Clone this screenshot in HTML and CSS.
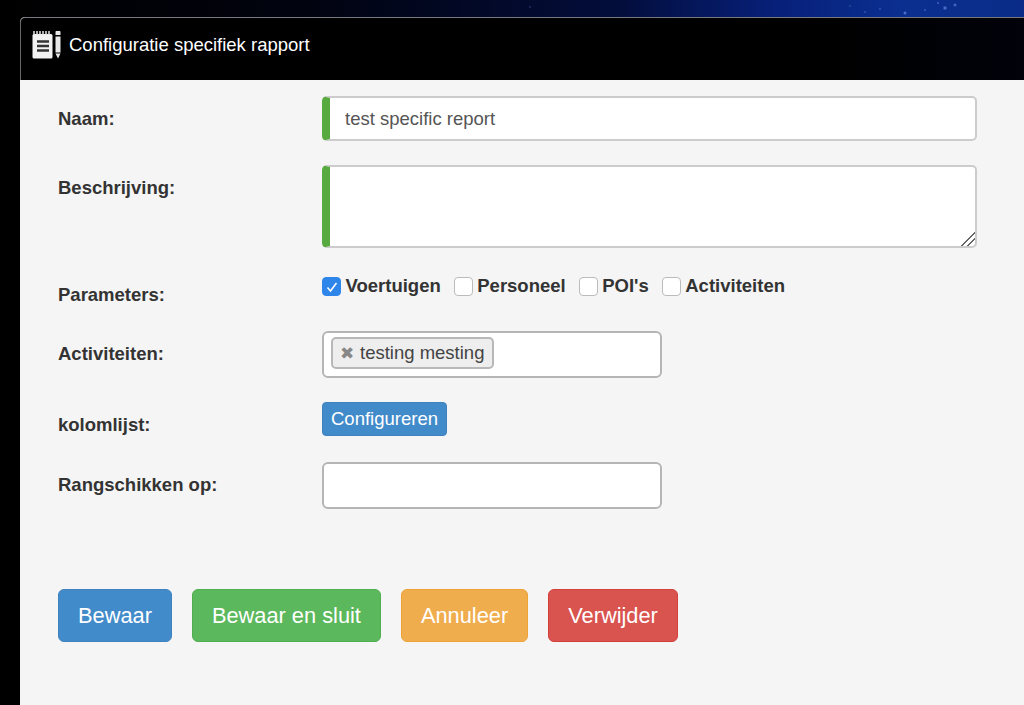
FILE: index.html
```html
<!DOCTYPE html>
<html lang="nl">
<head>
  <meta charset="UTF-8">
  <title>Configuratie specifiek rapport</title>
  <link rel="stylesheet" href="styles.css">
</head>
<body>
  <div class="window">
    <div class="window-head">
      <svg class="head-icon" width="30" height="28" viewBox="0 0 30 28">
        <rect x="0.500" y="3" width="20" height="24.500" rx="1.500" fill="#f2f2f2"/>
        <path d="M2 0v4M5 0v4M8 0v4M11 0v4M14 0v4M17 0v4" stroke="#e4e4e4" stroke-width="1.500"/>
        <path d="M5 10.500h12M5 15h12M5 19.500h12" stroke="#333" stroke-width="2.600"/>
        <path d="M23.500 1.500a2 2 0 0 1 5 0V4h-5zM23.500 5.500h5v16h-5zM23.500 22.500h5L26 27.500z" fill="#e8e8e8"/>
      </svg>
      <span class="head-title">Configuratie specifiek rapport</span>
    </div>
    <form class="form">
      <div class="row row-naam">
        <label class="lbl">Naam:</label>
        <input class="field required" value="test specific report">
      </div>
      <div class="row row-desc">
        <label class="lbl">Beschrijving:</label>
        <textarea class="field required area"></textarea>
      </div>
      <div class="row row-params">
        <label class="lbl">Parameters:</label>
        <div class="checks">
          <span class="check"><span class="box on"><svg width="18" height="18" viewBox="0 0 18 18"><path d="M4.500 9.500l3 3.500 6-8" fill="none" stroke="#fff" stroke-width="1.600"/></svg></span>Voertuigen</span>
          <span class="check"><span class="box"></span>Personeel</span>
          <span class="check"><span class="box"></span>POI's</span>
          <span class="check"><span class="box"></span>Activiteiten</span>
        </div>
      </div>
      <div class="row row-act">
        <label class="lbl">Activiteiten:</label>
        <div class="select2">
          <span class="tag"><span class="tag-x">✖</span>testing mesting</span>
        </div>
      </div>
      <div class="row row-kolom">
        <label class="lbl">kolomlijst:</label>
        <div><button type="button" class="btn btn-blue btn-small">Configureren</button></div>
      </div>
      <div class="row row-rang">
        <label class="lbl">Rangschikken op:</label>
        <div class="select2"></div>
      </div>
      <div class="actions">
        <button type="button" class="btn btn-blue">Bewaar</button>
        <button type="button" class="btn btn-green">Bewaar en sluit</button>
        <button type="button" class="btn btn-orange">Annuleer</button>
        <button type="button" class="btn btn-red">Verwijder</button>
      </div>
    </form>
  </div>
</body>
</html>
```

FILE: styles.css
```css
html, body {
  height: 100%;
  overflow: hidden;
}
body {
  margin: 0;
  padding: 17px 0 0 20px;
  box-sizing: border-box;
  font-family: "Liberation Sans", Arial, sans-serif;
  color: #333;
  background-color: #000;
  background-image:
    radial-gradient(circle at 905px 13px, #6f8fe6 0, transparent 2px),
    radial-gradient(circle at 945px 8px, #5f7fd8 0, transparent 2.500px),
    radial-gradient(circle at 938px 3px, #5877d0 0, transparent 1.500px),
    radial-gradient(circle at 925px 10px, #4a6ac8 0, transparent 1.500px),
    radial-gradient(circle at 955px 5px, #5f7fd8 0, transparent 2px),
    radial-gradient(circle at 880px 9px, #3f5fb8 0, transparent 1.500px),
    radial-gradient(circle at 865px 12px, #3f5fb8 0, transparent 1.500px),
    radial-gradient(circle at 850px 6px, #34509f 0, transparent 1.500px),
    radial-gradient(circle at 530px 7px, #2a3f7a 0, transparent 1.500px),
    linear-gradient(90deg, #000 0, #01030f 30%, #030d3a 60%, #07207a 76%, #0b2f90 88%, #0a2c88 100%);
  background-size: 100% 17px;
  background-repeat: no-repeat;
}
.window {
  height: 100%;
  background: #f5f5f5;
  border-top-left-radius: 5px;
}
.window-head {
  height: 63px;
  box-sizing: border-box;
  display: flex;
  align-items: center;
  padding: 0 0 9px 11px;
  gap: 7px;
  background: linear-gradient(90deg, #000 0, #000 80%, #01020a 100%);
  border-top: 1px solid #77797f;
  border-left: 1px solid #66686c;
  border-top-left-radius: 5px;
  color: #fff;
}
.head-icon {
  flex: none;
}
.head-title {
  font-size: 18.500px;
}
.form {
  padding: 16px 47px 0 38px;
}
.row {
  display: grid;
  grid-template-columns: 264px 1fr;
}
.lbl {
  font-size: 18.500px;
  font-weight: bold;
  line-height: 20px;
  padding-top: 13px;
}
.row-desc { margin-top: 24px; }
.row-params { margin-top: 27px; }
.row-params .lbl { padding-top: 10px; }
.row-act { margin-top: 26px; }
.row-kolom { margin-top: 24px; }
.row-rang { margin-top: 26px; }
.field {
  display: block;
  width: 100%;
  box-sizing: border-box;
  height: 45px;
  padding: 0 15px;
  font: 18.500px "Liberation Sans", Arial, sans-serif;
  color: #555;
  background: #fff;
  border: 2px solid #ccc;
  border-radius: 5px;
  outline: none;
}
.field.required {
  border-left: 8px solid #56aa3f;
}
.area {
  height: 83px;
  resize: vertical;
}
.area::-webkit-resizer {
  background: linear-gradient(135deg, transparent 53%, #666 53%, #666 58%, transparent 58%, transparent 73%, #666 73%, #666 78%, transparent 78%);
}
.checks {
  display: flex;
  gap: 13px;
  height: 22px;
  align-items: center;
}
.check {
  display: flex;
  align-items: center;
  gap: 4.500px;
  font-size: 18.500px;
  font-weight: bold;
}
.box {
  width: 19px;
  height: 19px;
  box-sizing: border-box;
  background: #fff;
  border: 1px solid #bbb;
  border-radius: 4px;
}
.box.on {
  background: #2f86ea;
  border-color: #2f86ea;
}
.box svg {
  display: block;
}
.select2 {
  width: 340px;
  height: 47px;
  box-sizing: border-box;
  padding: 4px 7px;
  background: #fff;
  border: 2px solid #b5b5b5;
  border-radius: 6px;
}
.tag {
  display: inline-flex;
  align-items: center;
  height: 32px;
  box-sizing: border-box;
  padding: 0 8px 0 7px;
  font-size: 18.500px;
  color: #444;
  background: #eee;
  border: 2px solid #b8b8b8;
  border-radius: 5px;
}
.tag-x {
  width: 14px;
  margin-right: 6px;
  font-size: 17px;
  text-align: center;
  color: #888;
}
.btn {
  height: 53px;
  padding: 0 19px;
  font: 21.800px "Liberation Sans", Arial, sans-serif;
  color: #fff;
  border: 1px solid transparent;
  border-radius: 6px;
}
.btn-small {
  display: block;
  height: 34px;
  padding: 0 8px;
  font-size: 18.500px;
  border-radius: 4px;
}
.btn-blue { background: #428bca; border-color: #3f82bd; }
.btn-green { background: #5cb85c; border-color: #4fae4f; }
.btn-orange { background: #f0ad4e; border-color: #eea236; }
.btn-red { background: #d9534f; border-color: #d43f3a; }
.actions {
  display: flex;
  gap: 20px;
  margin-top: 80px;
}
```
